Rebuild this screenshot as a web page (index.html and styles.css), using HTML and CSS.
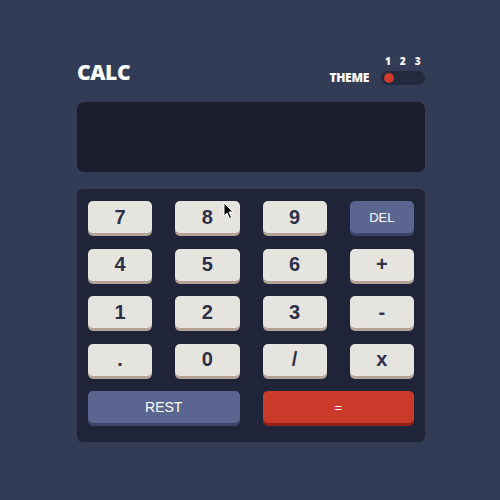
FILE: index.html
```html
<!DOCTYPE html>
<html>
<head>
<meta charset="utf-8">
<link rel="stylesheet" href="styles.css">
</head>
<body>
<div class="calc">
  <header class="top">
    <div class="logo">CALC</div>
    <div class="theme">
      <span class="theme-label">THEME</span>
      <div class="theme-ctl">
        <div class="nums"><span>1</span><span>2</span><span>3</span></div>
        <div class="toggle"><span class="dot"></span></div>
      </div>
    </div>
  </header>
  <div class="screen"></div>
  <div class="pad">
    <button class="key">7</button>
    <button class="key">8</button>
    <button class="key">9</button>
    <button class="key key-blue">DEL</button>
    <button class="key">4</button>
    <button class="key">5</button>
    <button class="key">6</button>
    <button class="key">+</button>
    <button class="key">1</button>
    <button class="key">2</button>
    <button class="key">3</button>
    <button class="key">-</button>
    <button class="key">.</button>
    <button class="key">0</button>
    <button class="key">/</button>
    <button class="key">x</button>
    <button class="key key-blue key-wide">REST</button>
    <button class="key key-red key-wide">=</button>
  </div>
</div>
<svg class="cursor" width="12" height="18" viewBox="0 0 12 18"><path d="M1 1 L1 14 L4 11 L6.5 16.5 L8.5 15.5 L6 10 L10 10 Z" fill="#000" stroke="#fff" stroke-width="1"/></svg>
</body>
</html>
```
FILE: styles.css
```css
html, body {
  margin: 0;
  padding: 0;
  background: #333c57;
  width: 500px;
  height: 500px;
  overflow: hidden;
  position: relative;
}
.calc {
  margin-left: 77px;
  width: 348px;
  padding-top: 55px;
  font-family: "Liberation Sans", Arial, sans-serif;
}
.top {
  display: flex;
  justify-content: space-between;
  align-items: flex-end;
  height: 30px;
  margin-bottom: 17px;
}
.logo {
  font-family: "Open Sans", sans-serif;
  font-weight: 800;
  font-size: 21px;
  color: #fff;
  letter-spacing: -0.4px;
  line-height: 20px;
  margin-bottom: 3px;
}
.theme {
  display: flex;
  align-items: flex-end;
  gap: 12px;
}
.theme-label {
  font-family: "Open Sans", sans-serif;
  font-weight: 800;
  font-size: 12px;
  color: #fff;
  line-height: 12px;
  letter-spacing: -0.3px;
  margin-bottom: 1px;
}
.theme-ctl {
  display: flex;
  flex-direction: column;
  gap: 5px;
}
.nums {
  display: flex;
  justify-content: flex-start;
  gap: 9px;
  padding-left: 4px;
  font-family: "Open Sans", sans-serif;
  font-weight: 800;
  font-size: 10px;
  line-height: 10px;
  color: #fff;
}
.toggle {
  width: 44px;
  height: 14px;
  border-radius: 7px;
  background: #232a3e;
  display: flex;
  align-items: center;
  padding-left: 3px;
  box-sizing: border-box;
}
.dot {
  width: 10px;
  height: 10px;
  border-radius: 50%;
  background: #cf3a2b;
}
.screen {
  height: 70px;
  border-radius: 7px;
  background: #1b1d2c;
  margin-bottom: 17px;
}
.pad {
  background: #1f2439;
  border-radius: 6px;
  padding: 12px 11px 19px;
  display: grid;
  grid-template-columns: repeat(4, 1fr);
  column-gap: 23px;
  row-gap: 15.5px;
}
.key {
  height: 32px;
  border: none;
  border-radius: 5px;
  background: #e6e4df;
  box-shadow: 0 3px 0 #b2a396;
  color: #2c3049;
  font-family: "Liberation Sans", Arial, sans-serif;
  font-weight: 700;
  font-size: 20px;
  padding: 0;
  display: flex;
  align-items: center;
  justify-content: center;
}
.key-blue {
  background: #5b6690;
  box-shadow: 0 3px 0 #3c4568;
  color: #fff;
  font-weight: 400;
  font-size: 13px;
}
.key-wide.key-blue {
  font-size: 14px;
}
.key-red {
  background: #c93a2a;
  box-shadow: 0 3px 0 #8e2418;
  color: #fff;
  font-weight: 400;
  font-size: 13px;
}
.key-wide {
  grid-column: span 2;
}
.cursor {
  position: absolute;
  left: 223px;
  top: 202px;
}
```
